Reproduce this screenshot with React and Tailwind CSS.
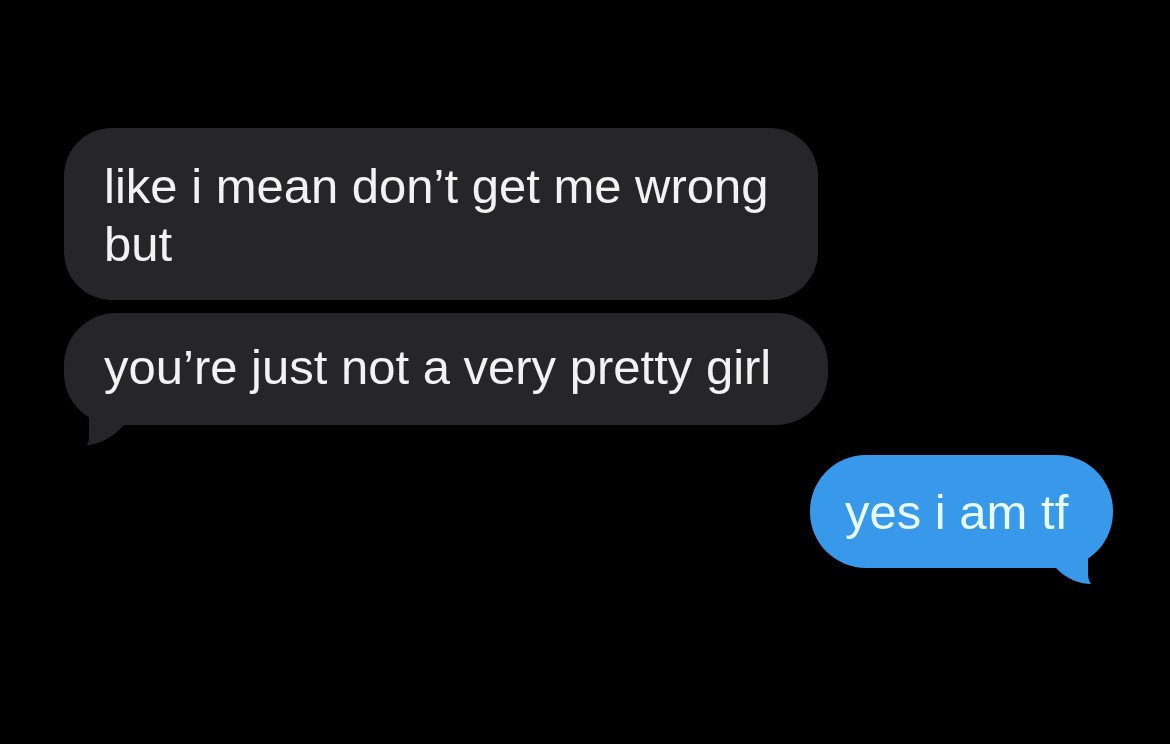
import React from 'react';

function TailLeft() {
  return (
    <svg className="absolute left-[14px] bottom-[-20px]" width="50" height="40" viewBox="0 0 50 40">
      <path d="M11 0 L11 28 C11 34 11 37 9 40 C22 39 34 33 46 20 L46 0 Z" fill="#262628" />
    </svg>
  );
}

function TailRight() {
  return (
    <svg className="absolute right-[16px] bottom-[-18px]" width="52" height="40" viewBox="0 0 52 40">
      <path d="M43 0 L43 26 C43 32 44 35 46 38 C36 38 22 34 10 21 L10 0 Z" fill="#3899ea" />
    </svg>
  );
}

export default function App() {
  return (
    <div
      className="w-full h-[744px] bg-black overflow-hidden"
      style={{ fontFamily: '"Liberation Sans", Arial, sans-serif' }}
    >
      <div className="flex flex-col pt-[128px] px-[57px] pl-[64px]">
        {/* received messages */}
        <div className="flex flex-col gap-[13px] items-start">
          <div className="w-[754px] rounded-[48px] bg-[#262628] pl-[40px] pr-[40px] pt-[29px] pb-[27px] text-[49px] leading-[58px] text-[#f2f2f2]">
            like i mean don’t get me wrong
            <br />
            but
          </div>
          <div className="relative w-[764px] rounded-[52px] bg-[#262628] pl-[40px] pr-[40px] pt-[25px] pb-[29px] text-[49px] leading-[58px] text-[#f2f2f2]">
            you’re just not a very pretty girl
            <TailLeft />
          </div>
        </div>

        {/* sent message */}
        <div className="flex justify-end mt-[30px]">
          <div className="relative w-[303px] rounded-[56px] bg-[#3899ea] pl-[35px] pt-[28px] pb-[27px] text-[49px] leading-[58px] text-[#e8fbff]">
            yes i am tf
            <TailRight />
          </div>
        </div>
      </div>
    </div>
  );
}
